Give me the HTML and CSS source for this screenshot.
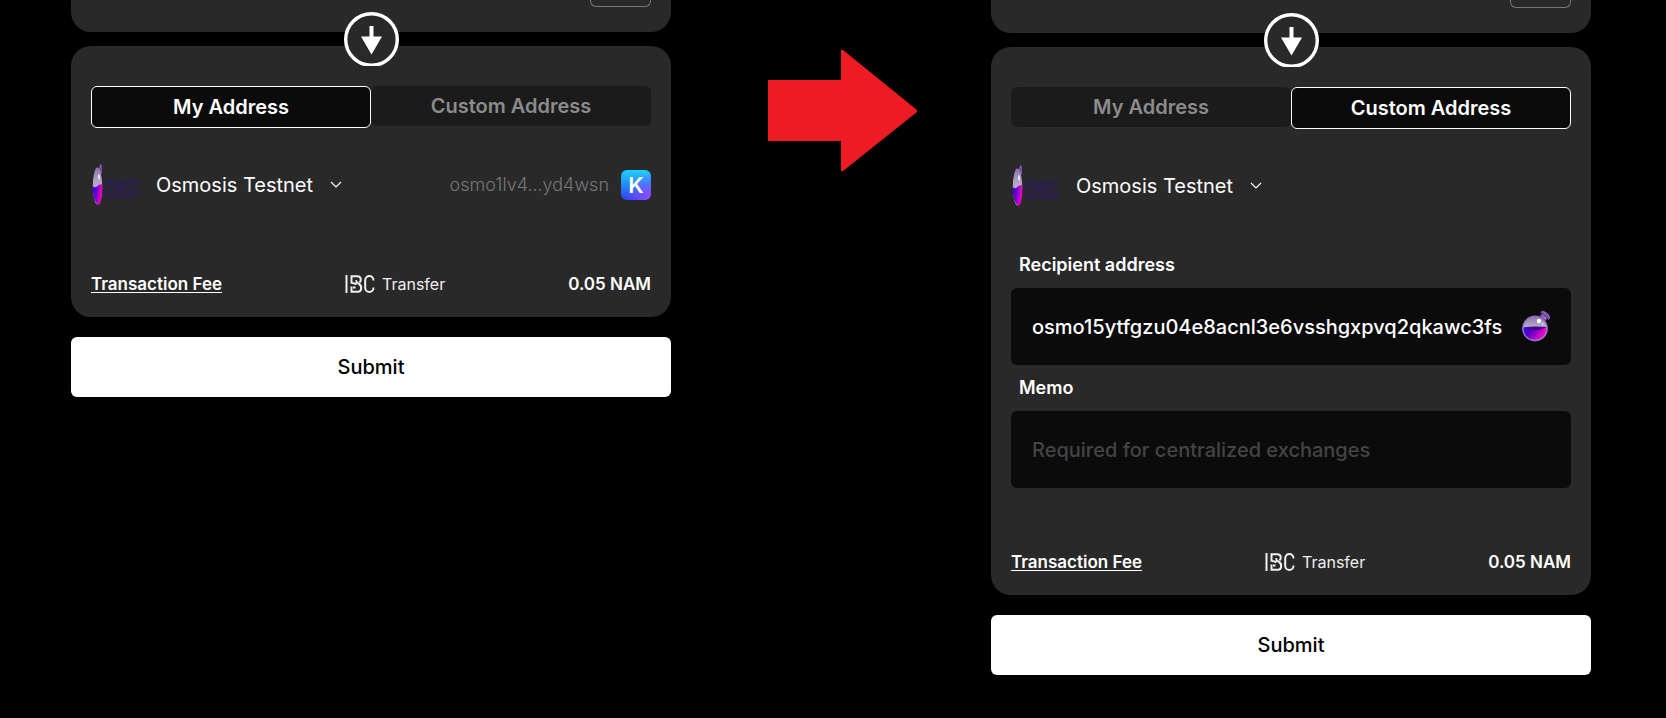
FILE: index.html
```html
<!DOCTYPE html>
<html lang="en">
<head>
<meta charset="utf-8">
<meta name="viewport" content="width=device-width, initial-scale=1">
<title>IBC Transfer</title>
<link rel="stylesheet" href="styles.css">
</head>
<body>
<svg class="defs" aria-hidden="true">
  <defs>
    <linearGradient id="liquid" x1="0" y1="0" x2="1" y2="0.3">
      <stop offset="0" stop-color="#2a00f0"/><stop offset="0.45" stop-color="#6a00c8"/><stop offset="1" stop-color="#f800c8"/>
    </linearGradient>
    <linearGradient id="glass" x1="0" y1="0" x2="0" y2="1">
      <stop offset="0" stop-color="#8d74ac"/><stop offset="0.4" stop-color="#b5a6c8"/><stop offset="1" stop-color="#b5a6c8"/>
    </linearGradient>
    <linearGradient id="keplr" x1="0" y1="0" x2="0" y2="1">
      <stop offset="0" stop-color="#1fd1ff"/><stop offset="1" stop-color="#2b3ff0"/>
    </linearGradient>
    <radialGradient id="keplr-glow" cx="1" cy="1" r="0.9">
      <stop offset="0" stop-color="#9a4dff"/><stop offset="1" stop-color="#9a4dff" stop-opacity="0"/>
    </radialGradient>
    <symbol id="swap-arrow" viewBox="0 0 55 54">
      <circle cx="28" cy="27.500" r="25.800" fill="#292929" stroke="#fff" stroke-width="3.400"/>
      <path d="M26 14h4v10.500h8.500L28 42.500 17.500 24.500H26z" fill="#fff"/>
    </symbol>
    <symbol id="osmosis" viewBox="0 0 48 42">
      <path d="M8 3l1.500-3 1.500 1v8l-2 2z" fill="#7b4fa3"/>
      <ellipse cx="6.500" cy="22" rx="4.700" ry="18.500" fill="url(#glass)"/>
      <path d="M1.700 22q2.500 2.500 4.800 0t4.800-1.500C11.500 32 9.500 40.500 8 41 4.500 40 1.700 33 1.700 22z" fill="url(#liquid)"/>
      <ellipse cx="8" cy="13" rx="1" ry="3" fill="#efe8f5"/>
      <g fill="none" stroke="#2b1d55" stroke-width="1.400">
        <rect x="14.500" y="16" width="3.200" height="18" rx="1.600"/>
        <path d="M23 19c0-4-3.500-4-3.500 0 0 6 3.500 5 3.500 11 0 5-3.500 5-3.500 0"/>
        <path d="M25 35V16l2.200 10 2.200-10v19"/>
        <rect x="31.400" y="16" width="3.200" height="18" rx="1.600"/>
        <path d="M39.900 19c0-4-3.500-4-3.500 0 0 6 3.500 5 3.500 11 0 5-3.500 5-3.500 0M42 15v20M47.200 19c0-4-3.300-4-3.300 0 0 6 3.300 5 3.300 11 0 5-3.300 5-3.300 0"/>
      </g>
    </symbol>
    <symbol id="flask" viewBox="0 0 28 31">
      <path d="M17.500 5l4-4 5.500 4.500L23.500 10z" fill="#7a4aa8"/>
      <path d="M19 1.800q1.300-1.800 4-.3t4 4q.6 2.300-1 2.700" fill="none" stroke="#9a66cc" stroke-width="1.500"/>
      <path d="M20.500 5l3.500 3" stroke="#c3a2e0" stroke-width="1"/>
      <circle cx="13" cy="17.500" r="12.300" fill="url(#glass)" stroke="#8a6cc4" stroke-width="1.200"/>
      <path d="M1.700 16.500Q8 18 13 16.800T24.300 16C25 24 19.500 28.700 13 28.700S1 24 1.700 16.500z" fill="url(#liquid)"/>
      <path d="M1.700 16.300Q12 15 24.300 16 18 19.500 13 19.200T1.700 16.300z" fill="#3f0a8c"/>
      <circle cx="17" cy="10" r="2.200" fill="#fff"/><circle cx="20.500" cy="12.800" r="1" fill="#eee6f6"/>
      <g fill="#d45cff"><circle cx="10" cy="25" r=".6"/><circle cx="14" cy="26.500" r=".6"/><circle cx="18" cy="23.500" r=".6"/><circle cx="15.500" cy="24" r=".5"/></g>
    </symbol>
    <symbol id="ibc" viewBox="0 0 30 18">
      <g fill="none" stroke="#f0f0f0" stroke-width="2">
        <path d="M1.500 0v18"/>
        <path d="M12 6H10.500M6.500 8.500V1.200h6c3.500 0 4.300 4.300 2 6.300M6.500 8q3.500 0 5 1.500M6.500 11.500v5.300h6.500c3.800 0 4.300-6 1-7.800L11 6.500M8 12.500h2.500"/>
        <path d="M28.500 5.500C28.500-.5 20.200-.5 20.200 5.500v7c0 6 8.300 6 8.300 0"/>
      </g>
    </symbol>
    <symbol id="chevron" viewBox="0 0 12 8">
      <path d="M1 1l5 5 5-5" fill="none" stroke="#fff" stroke-width="1.200"/>
    </symbol>
  </defs>
</svg>

<main class="board">
  <section class="panel" aria-label="Send to my address">
    <div class="card source"><button class="chip" type="button" aria-label="Max"></button></div>
    <div class="divider"><button class="swap" type="button" aria-label="Swap"><svg><use href="#swap-arrow"/></svg></button></div>
    <div class="card destination">
      <div class="tabs">
        <button class="tab active" type="button">My Address</button>
        <button class="tab" type="button">Custom Address</button>
      </div>
      <div class="network">
        <button class="chain" type="button">
          <svg class="chain-logo"><use href="#osmosis"/></svg>
          <span>Osmosis Testnet</span>
          <svg class="chevron"><use href="#chevron"/></svg>
        </button>
        <div class="wallet">
          <span>osmo1lv4...yd4wsn</span>
          <svg class="wallet-logo" viewBox="0 0 30 30">
            <rect width="30" height="30" rx="6" fill="url(#keplr)"/>
            <rect width="30" height="30" rx="6" fill="url(#keplr-glow)"/>
            <text class="wallet-letter" x="15" y="23" text-anchor="middle">K</text>
          </svg>
        </div>
      </div>
      <div class="fees">
        <a class="fee-link" href="#fee">Transaction Fee</a>
        <span class="method"><svg class="ibc"><use href="#ibc"/></svg>Transfer</span>
        <span class="fee">0.05 NAM</span>
      </div>
    </div>
    <button class="submit" type="submit">Submit</button>
  </section>

  <div class="step">
    <svg class="step-arrow" viewBox="0 0 149 121"><path d="M0 30h73V0h2l74 60v2l-74 59h-2V91H0z" fill="#ed1c24"/></svg>
  </div>

  <form class="panel custom" aria-label="Send to a custom address">
    <div class="card source"><button class="chip" type="button" aria-label="Max"></button></div>
    <div class="divider"><button class="swap" type="button" aria-label="Swap"><svg><use href="#swap-arrow"/></svg></button></div>
    <div class="card destination">
      <div class="tabs">
        <button class="tab" type="button">My Address</button>
        <button class="tab active" type="button">Custom Address</button>
      </div>
      <div class="network">
        <button class="chain" type="button">
          <svg class="chain-logo"><use href="#osmosis"/></svg>
          <span>Osmosis Testnet</span>
          <svg class="chevron"><use href="#chevron"/></svg>
        </button>
      </div>
      <div class="fields">
        <label class="label" for="recipient">Recipient address</label>
        <div class="field">
          <input class="input" id="recipient" type="text" value="osmo15ytfgzu04e8acnl3e6vsshgxpvq2qkawc3fs">
          <svg class="flask"><use href="#flask"/></svg>
        </div>
        <label class="label" for="memo">Memo</label>
        <div class="field">
          <input class="input" id="memo" type="text" placeholder="Required for centralized exchanges">
        </div>
      </div>
      <div class="fees">
        <a class="fee-link" href="#fee">Transaction Fee</a>
        <span class="method"><svg class="ibc"><use href="#ibc"/></svg>Transfer</span>
        <span class="fee">0.05 NAM</span>
      </div>
    </div>
    <button class="submit" type="submit">Submit</button>
  </form>
</main>
</body>
</html>
```
FILE: styles.css
```css
* {
  box-sizing: border-box;
}

body {
  margin: 0;
  background: #000;
  color: #fff;
  font-family: Inter, "Liberation Sans", sans-serif;
  font-size: 18px;
  line-height: 24px;
}

button,
input {
  margin: 0;
  padding: 0;
  border: 0;
  background: none;
  color: inherit;
  font: inherit;
}

.defs {
  position: absolute;
  width: 0;
  height: 0;
}

.board {
  display: grid;
  grid-template-columns: 15fr 8fr 15fr;
  align-items: start;
  padding: 0 75px 0 71px;
}

.panel {
  display: flex;
  flex-direction: column;
  min-width: 0;
}

.card {
  background: #292929;
  border-radius: 20px;
}

.source {
  display: flex;
  justify-content: flex-end;
  padding: 0 20px 25px;
  border-radius: 0 0 20px 20px;
}

.chip {
  width: 61px;
  height: 7px;
  border: 1px solid #777;
  border-top: 0;
  border-radius: 0 0 6px 6px;
}

.custom .chip {
  height: 8px;
}

.divider {
  position: relative;
  height: 14px;
}

.swap {
  position: absolute;
  top: 50%;
  left: 50%;
  width: 56px;
  height: 54px;
  transform: translate(-50%, -50%);
}

.swap svg {
  display: block;
  width: 56px;
  height: 54px;
}

.destination {
  padding: 40px 20px 21px;
}

.tabs {
  display: grid;
  grid-template-columns: 1fr 1fr;
  align-items: start;
  height: 42px;
}

.tab {
  height: 40px;
  border-radius: 6px;
  background: #1b1b1b;
  color: #8c8c8c;
  font-size: 20px;
  font-weight: 600;
}

.tab.active {
  height: 42px;
  border: 1px solid #fff;
  background: #0b0b0b;
  color: #fff;
}

.network,
.chain,
.wallet,
.fees,
.method {
  display: flex;
  align-items: center;
}

.network {
  justify-content: space-between;
  height: 42px;
  margin-top: 36px;
}

.chain {
  gap: 17px;
  font-size: 20px;
}

.chain-logo {
  width: 48px;
  height: 42px;
}

.chevron {
  width: 12px;
  height: 8px;
}

.wallet {
  gap: 12px;
  color: #777;
  font-weight: 300;
}

.wallet-logo {
  width: 30px;
  height: 30px;
}

.wallet-letter {
  fill: #fff;
  font-size: 22px;
  font-weight: 600;
}

.fields {
  display: flex;
  flex-direction: column;
  gap: 11px;
  margin-top: 46px;
}

.label {
  padding-left: 8px;
  font-weight: 600;
}

.field {
  display: flex;
  align-items: center;
  gap: 15px;
  height: 77px;
  padding: 0 21px;
  border-radius: 6px;
  background: #0b0b0b;
}

.input {
  flex: 1;
  min-width: 0;
  height: 100%;
  outline: 0;
  font-size: 20px;
  font-weight: 500;
}

.input::placeholder {
  color: #444;
  opacity: 1;
}

.flask {
  width: 28px;
  height: 31px;
}

.fees {
  justify-content: space-between;
  margin-top: 66px;
  font-size: 17px;
}

.custom .fees {
  margin-top: 62px;
}

.fee-link {
  color: #fff;
  font-weight: 600;
  text-underline-offset: 2px;
}

.method {
  gap: 7px;
  color: #f0f0f0;
  font-size: 16px;
}

.ibc {
  width: 30px;
  height: 18px;
}

.fee {
  font-weight: 600;
}

.submit {
  height: 60px;
  margin-top: 20px;
  border-radius: 6px;
  background: #fff;
  color: #000;
  font-size: 20px;
  font-weight: 500;
}

.step {
  display: flex;
  justify-content: flex-end;
  padding: 50px 74px 0 0;
}

.step-arrow {
  width: 149px;
  height: 121px;
}
```
